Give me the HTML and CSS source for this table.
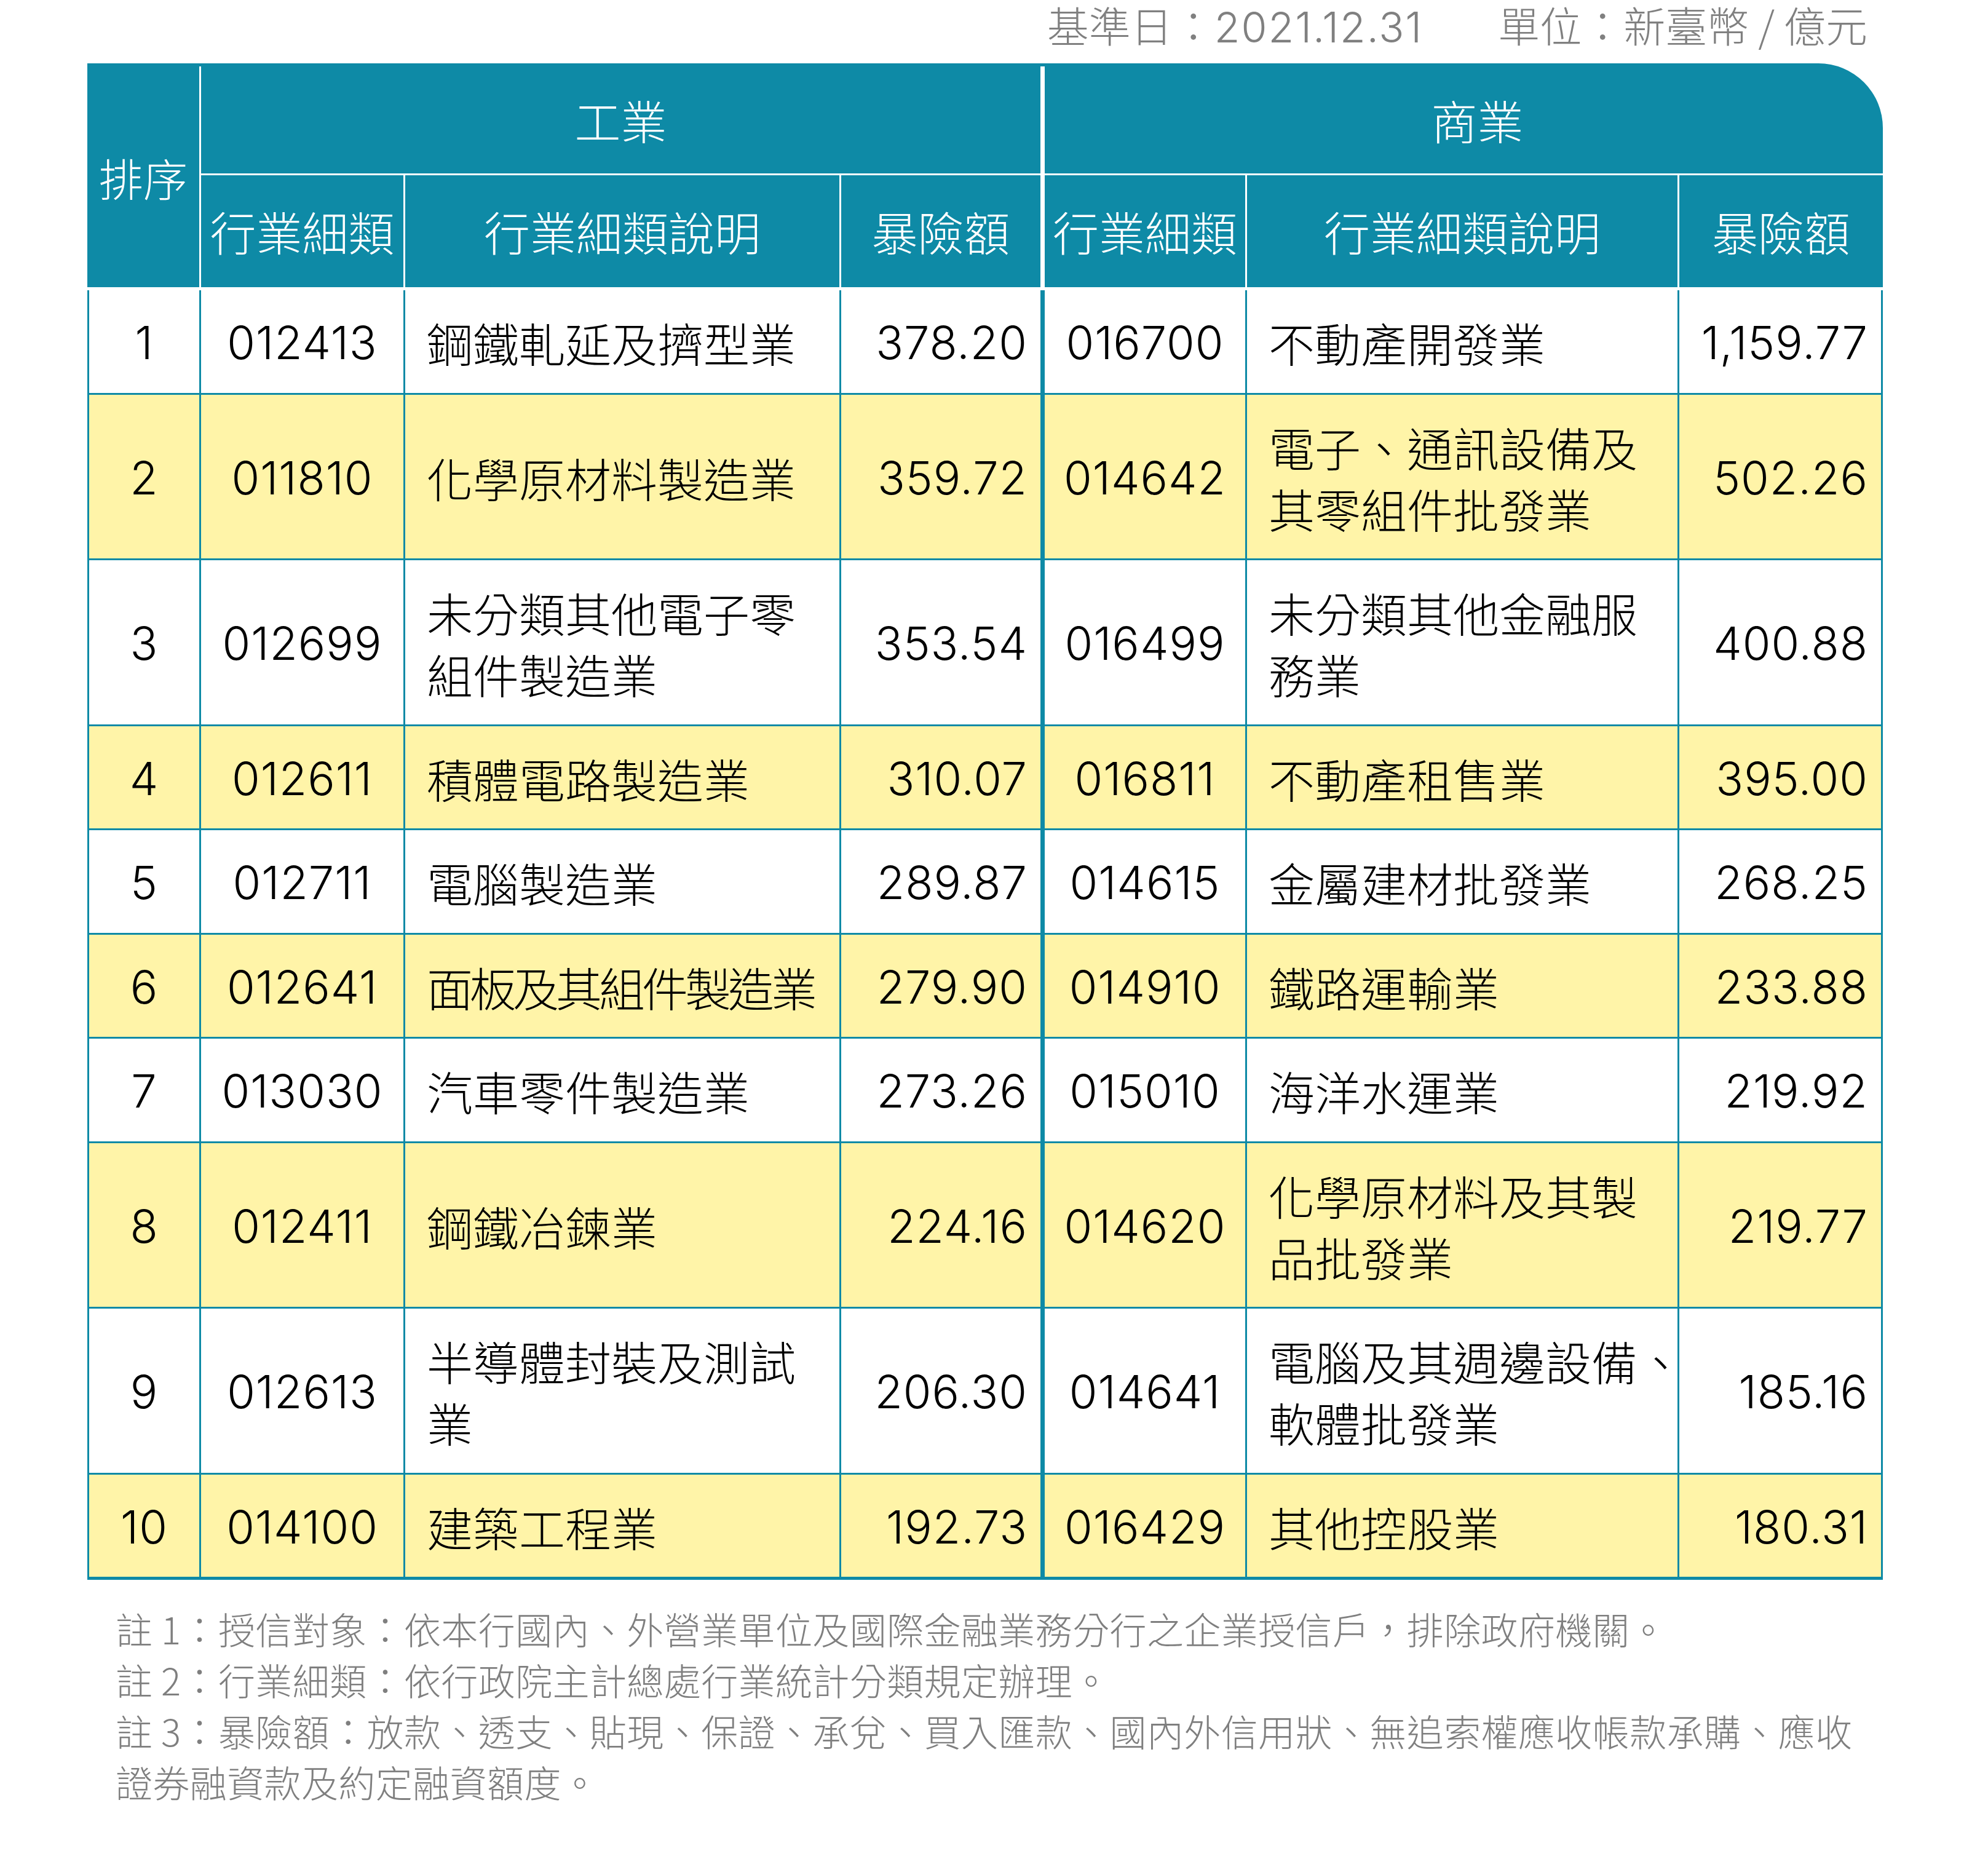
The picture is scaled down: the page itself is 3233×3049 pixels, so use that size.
FILE: index.html
```html
<!DOCTYPE html>
<html lang="zh-Hant">
<head>
<meta charset="utf-8">
<title>前十大行業暴險額</title>
<link rel="stylesheet" href="styles.css">
</head>
<body>
<div class="page">
  <div class="meta">
    <span>基準日：<span class="num">2021.12.31</span></span>
    <span>單位：新臺幣 / 億元</span>
  </div>
  <div class="sheet">
    <div class="thead">
      <div class="th th-rank">排序</div>
      <div class="th th-group">工業</div>
      <div class="th th-group mid">商業</div>
      <div class="th th-sub">行業細類</div>
      <div class="th th-sub">行業細類說明</div>
      <div class="th th-sub">暴險額</div>
      <div class="th th-sub mid">行業細類</div>
      <div class="th th-sub">行業細類說明</div>
      <div class="th th-sub">暴險額</div>
    </div>
    <div class="tbody">
      <div class="row">
        <div class="cell c num">1</div><div class="cell c num">012413</div><div class="cell d"><span>鋼鐵軋延及擠型業</span></div><div class="cell a num">378.20</div>
        <div class="cell c num mid">016700</div><div class="cell d"><span>不動產開發業</span></div><div class="cell a num">1,159.77</div>
      </div>
      <div class="row alt">
        <div class="cell c num">2</div><div class="cell c num">011810</div><div class="cell d"><span>化學原材料製造業</span></div><div class="cell a num">359.72</div>
        <div class="cell c num mid">014642</div><div class="cell d"><span>電子、通訊設備及<br>其零組件批發業</span></div><div class="cell a num">502.26</div>
      </div>
      <div class="row">
        <div class="cell c num">3</div><div class="cell c num">012699</div><div class="cell d"><span>未分類其他電子零<br>組件製造業</span></div><div class="cell a num">353.54</div>
        <div class="cell c num mid">016499</div><div class="cell d"><span>未分類其他金融服<br>務業</span></div><div class="cell a num">400.88</div>
      </div>
      <div class="row alt">
        <div class="cell c num">4</div><div class="cell c num">012611</div><div class="cell d"><span>積體電路製造業</span></div><div class="cell a num">310.07</div>
        <div class="cell c num mid">016811</div><div class="cell d"><span>不動產租售業</span></div><div class="cell a num">395.00</div>
      </div>
      <div class="row">
        <div class="cell c num">5</div><div class="cell c num">012711</div><div class="cell d"><span>電腦製造業</span></div><div class="cell a num">289.87</div>
        <div class="cell c num mid">014615</div><div class="cell d"><span>金屬建材批發業</span></div><div class="cell a num">268.25</div>
      </div>
      <div class="row alt">
        <div class="cell c num">6</div><div class="cell c num">012641</div><div class="cell d tight"><span>面板及其組件製造業</span></div><div class="cell a num">279.90</div>
        <div class="cell c num mid">014910</div><div class="cell d"><span>鐵路運輸業</span></div><div class="cell a num">233.88</div>
      </div>
      <div class="row">
        <div class="cell c num">7</div><div class="cell c num">013030</div><div class="cell d"><span>汽車零件製造業</span></div><div class="cell a num">273.26</div>
        <div class="cell c num mid">015010</div><div class="cell d"><span>海洋水運業</span></div><div class="cell a num">219.92</div>
      </div>
      <div class="row alt">
        <div class="cell c num">8</div><div class="cell c num">012411</div><div class="cell d"><span>鋼鐵冶鍊業</span></div><div class="cell a num">224.16</div>
        <div class="cell c num mid">014620</div><div class="cell d"><span>化學原材料及其製<br>品批發業</span></div><div class="cell a num">219.77</div>
      </div>
      <div class="row">
        <div class="cell c num">9</div><div class="cell c num">012613</div><div class="cell d"><span>半導體封裝及測試<br>業</span></div><div class="cell a num">206.30</div>
        <div class="cell c num mid">014641</div><div class="cell d"><span>電腦及其週邊設備、<br>軟體批發業</span></div><div class="cell a num">185.16</div>
      </div>
      <div class="row alt">
        <div class="cell c num">10</div><div class="cell c num">014100</div><div class="cell d"><span>建築工程業</span></div><div class="cell a num">192.73</div>
        <div class="cell c num mid">016429</div><div class="cell d"><span>其他控股業</span></div><div class="cell a num">180.31</div>
      </div>
    </div>
  </div>
  <div class="notes">
    <p>註 1：授信對象：依本行國內、外營業單位及國際金融業務分行之企業授信戶，排除政府機關。</p>
    <p>註 2：行業細類：依行政院主計總處行業統計分類規定辦理。</p>
    <p>註 3：暴險額：放款、透支、貼現、保證、承兌、買入匯款、國內外信用狀、無追索權應收帳款承購、應收證券融資款及約定融資額度。</p>
  </div>
</div>
</body>
</html>
```
FILE: styles.css
```css
* {
  box-sizing: border-box;
}

html,
body {
  margin: 0;
  padding: 0;
  background: #ffffff;
}

body {
  font-family: "Noto Sans CJK TC", "Noto Sans CJK SC", sans-serif;
  font-weight: 300;
  color: #000000;
}

.page {
  width: 3233px;
  padding-left: 142px;
}

.num {
  font-family: "Inter", "Noto Sans CJK TC", sans-serif;
  font-weight: 300;
  font-size: 74px;
  letter-spacing: 1px;
}

/* date / unit line */
.meta {
  display: flex;
  justify-content: flex-end;
  gap: 122px;
  width: 2920px;
  height: 103px;
  padding-right: 25px;
  padding-top: 2px;
  font-size: 68px;
  line-height: 76px;
  color: #808080;
  white-space: nowrap;
}

.meta .num {
  font-size: 68px;
  letter-spacing: 2px;
  line-height: 60px;
}

.sheet {
  width: 2920px;
}

/* header */
.thead {
  display: grid;
  grid-template-columns: 182px 332px 709px 327px 333px 703px 334px;
  grid-template-rows: 174px 185px;
  padding-top: 5px;
  margin-bottom: 5px;
  background: #0e8aa6;
  border-top-right-radius: 105px;
  color: #ffffff;
  font-size: 75px;
  line-height: 100px;
}

.th {
  display: flex;
  align-items: center;
  justify-content: center;
  white-space: nowrap;
}

.th-rank {
  grid-row: 1 / 3;
  font-size: 72px;
}

.th-group {
  grid-column: span 3;
  border-left: 3px solid #ffffff;
}

.th-group.mid {
  padding-left: 44px;
}

.th-sub {
  border-left: 3px solid #ffffff;
  border-top: 3px solid #ffffff;
}

.th.mid {
  border-left-width: 7px;
}

/* body */
.row {
  display: grid;
  grid-template-columns: 179px 332px 709px 327px 333px 703px 331px;
  border-left: 3px solid #0e8aa6;
  border-right: 3px solid #0e8aa6;
  border-bottom: 3px solid #0e8aa6;
  font-size: 75px;
  line-height: 100px;
  background: #ffffff;
}

.row.alt {
  background: #fff4a8;
}

.row:last-child {
  border-bottom-width: 5px;
}

.cell {
  display: flex;
  align-items: center;
  padding: 35px 0 31.5px;
  border-left: 3px solid #0e8aa6;
  white-space: nowrap;
}

.cell:first-child {
  border-left: 0;
}

.cell.mid {
  border-left-width: 7px;
}

.cell.c {
  justify-content: center;
}

.cell.d {
  justify-content: flex-start;
  padding-left: 35px;
}

.cell.d.tight {
  letter-spacing: -5px;
}

.cell.a {
  justify-content: flex-end;
  padding-right: 21px;
}

/* notes */
.notes {
  width: 2900px;
  margin-top: 37px;
  padding-left: 46px;
  font-size: 60px;
  line-height: 83px;
  letter-spacing: 0.4px;
  color: #7f7f7f;
}

.notes p {
  margin: 0;
}
```
